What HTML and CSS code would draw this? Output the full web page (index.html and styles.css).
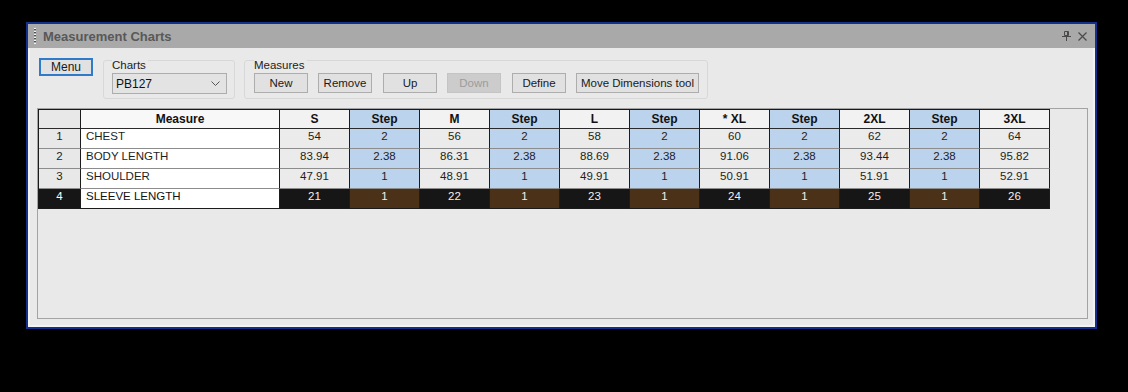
FILE: index.html
```html
<!DOCTYPE html>
<html>
<head>
<meta charset="utf-8">
<link rel="stylesheet" href="styles.css">
</head>
<body>
<div class="window">
  <div class="titlebar">
    <span class="grip"></span>
    <span class="title">Measurement Charts</span>
    <span class="spacer"></span>
    <svg class="tb-icon" width="9" height="10" viewBox="0 0 9 10">
      <path d="M2.5 0.5h4v4h-4z M5.5 0.5v4" fill="none" stroke="#4a4a4a" stroke-width="1"/>
      <path d="M0 5.5h9 M4.5 5.5v4.5" fill="none" stroke="#4a4a4a" stroke-width="1"/>
    </svg>
    <svg class="tb-icon close" width="9" height="9" viewBox="0 0 9 9">
      <path d="M0.5 0.5l8 8 M8.5 0.5l-8 8" fill="none" stroke="#4a4a4a" stroke-width="1.2"/>
    </svg>
  </div>
  <div class="content">
    <div class="toolbar">
      <button class="btn menu">Menu</button>
      <div class="group charts">
        <span class="group-label">Charts</span>
        <div class="combo">
          <span>PB127</span>
          <svg width="9" height="5" viewBox="0 0 9 5"><path d="M0.5 0.5l4 4 4-4" fill="none" stroke="#555" stroke-width="1"/></svg>
        </div>
      </div>
      <div class="group measures">
        <span class="group-label">Measures</span>
        <div class="btn-row">
          <button class="btn">New</button>
          <button class="btn">Remove</button>
          <button class="btn up">Up</button>
          <button class="btn disabled">Down</button>
          <button class="btn define">Define</button>
          <button class="btn wide">Move Dimensions tool</button>
        </div>
      </div>
    </div>
    <div class="grid">
      <table>
        <thead>
          <tr>
            <th class="rh"></th>
            <th class="mh">Measure</th>
            <th>S</th><th class="st">Step</th>
            <th>M</th><th class="st">Step</th>
            <th>L</th><th class="st">Step</th>
            <th>* XL</th><th class="st">Step</th>
            <th>2XL</th><th class="st">Step</th>
            <th>3XL</th>
          </tr>
        </thead>
        <tbody>
          <tr>
            <td class="rh">1</td><td class="name">CHEST</td>
            <td>54</td><td class="st">2</td><td>56</td><td class="st">2</td><td>58</td><td class="st">2</td><td>60</td><td class="st">2</td><td>62</td><td class="st">2</td><td>64</td>
          </tr>
          <tr>
            <td class="rh">2</td><td class="name">BODY LENGTH</td>
            <td>83.94</td><td class="st">2.38</td><td>86.31</td><td class="st">2.38</td><td>88.69</td><td class="st">2.38</td><td>91.06</td><td class="st">2.38</td><td>93.44</td><td class="st">2.38</td><td>95.82</td>
          </tr>
          <tr>
            <td class="rh">3</td><td class="name">SHOULDER</td>
            <td>47.91</td><td class="st">1</td><td>48.91</td><td class="st">1</td><td>49.91</td><td class="st">1</td><td>50.91</td><td class="st">1</td><td>51.91</td><td class="st">1</td><td>52.91</td>
          </tr>
          <tr class="sel">
            <td class="rh">4</td><td class="name">SLEEVE LENGTH</td>
            <td>21</td><td class="st">1</td><td>22</td><td class="st">1</td><td>23</td><td class="st">1</td><td>24</td><td class="st">1</td><td>25</td><td class="st">1</td><td>26</td>
          </tr>
        </tbody>
      </table>
    </div>
  </div>
</div>
</body>
</html>
```

FILE: styles.css
```css
html, body {
  margin: 0;
  background: #000;
}
body {
  padding: 22px 0 0 26px;
  font-family: "Liberation Sans", Arial, sans-serif;
  font-size: 11px;
  color: #111;
}
.window {
  width: 1067px;
  height: 303px;
  border: 2px solid #13308a;
  background: #e9e9e9;
  display: flex;
  flex-direction: column;
}
.titlebar {
  height: 24px;
  background: #a9a9a9;
  display: flex;
  align-items: center;
  flex: none;
}
.grip {
  width: 2px;
  height: 16px;
  margin-left: 6px;
  margin-right: 7px;
  background: repeating-linear-gradient(to bottom, #f4f4f4 0 1px, #505050 1px 2px, #a9a9a9 2px 3px);
}
.title {
  font-weight: bold;
  font-size: 13px;
  color: #585858;
}
.spacer { flex: 1; }
.tb-icon { display: block; margin-right: 7px; }
.tb-icon.close { margin-right: 8px; margin-left: 0; }
.content {
  flex: 1;
  border: 2px solid #f3f3f3;
  border-top: none;
  padding: 10px 0 0 7px;
  display: flex;
  flex-direction: column;
}
.toolbar {
  display: flex;
  align-items: flex-start;
  height: 41px;
}
.btn {
  font-family: "Liberation Sans", Arial, sans-serif;
  font-size: 11.5px;
  color: #1a1a1a;
  background: #e1e1e1;
  border: 1px solid #adadad;
  width: 54px;
  height: 20px;
  padding: 0;
  margin: 0;
}
.btn.menu {
  margin-left: 2px;
  border: 2px solid #2f7bc9;
  height: 18px;
  width: 54px;
  font-size: 12px;
}
.group {
  margin-left: 10px;
  margin-top: 2px;
  border: 1px solid #d8d8d8;
  border-radius: 3px;
  display: flex;
  flex-direction: column;
  align-items: flex-start;
  padding: 0 7px 4px 8px;
}
.group-label {
  margin-top: -2px;
  margin-bottom: 1px;
  background: #e9e9e9;
  padding-right: 2px;
  line-height: 13px;
  font-size: 11.5px;
  color: #222;
}
.combo {
  height: 19px;
  border: 1px solid #adadad;
  background: #e3e3e3;
  display: flex;
  align-items: center;
  justify-content: space-between;
  padding: 0 6px 0 3px;
  box-sizing: content-box;
  width: 104px;
  font-size: 12px;
}
.measures { margin-left: 9px; padding: 0 8px 5px 9px; }
.btn-row {
  display: flex;
  gap: 10px;
}
.btn.up { margin-left: 1px; }
.btn.define { margin-left: 1px; }
.btn.wide { width: 123px; }
.btn.disabled {
  background: #cccccc;
  border-color: #c4c4c4;
  color: #9c9c9c;
}
.grid {
  margin-top: 9px;
  width: 1049px;
  height: 209px;
  border: 1px solid #a3a3a3;
}
table {
  border-collapse: separate;
  border-spacing: 0;
  border-top: 1px solid #1a1a1a;
  border-left: 1px solid #1a1a1a;
  table-layout: fixed;
}
th, td {
  width: 69px;
  padding: 0;
  text-align: center;
  border-right: 1px solid #1c1c1c;
  border-bottom: 1px solid #8c8c8c;
  white-space: nowrap;
  overflow: hidden;
}
th {
  height: 18px;
  font-size: 12px;
  font-weight: bold;
  background: #f2f2f2;
  border-bottom-color: #2a2a2a;
}
td {
  height: 19px;
  font-size: 11.5px;
  background: #ebebeb;
  line-height: 15px;
  vertical-align: top;
  color: #1e1e1e;
}
th.rh, td.rh { width: 41px; background: #e8e8e8; }
th.mh { width: 198px; background: #f8f8f8; }
td.name {
  width: 193px;
  background: #fff;
  text-align: left;
  padding-left: 5px;
}
.st { background: #bcd3ed; }
th.st { background: #bcd3ed; }
tr.sel td { background: #161616; color: #f0f0f0; border-bottom-color: #1a1a1a; }
tr.sel td.st { background: #4a3117; }
tr.sel td.name { background: #fff; color: #111; }
tr.sel td.rh { background: #161616; color: #fff; }
```
